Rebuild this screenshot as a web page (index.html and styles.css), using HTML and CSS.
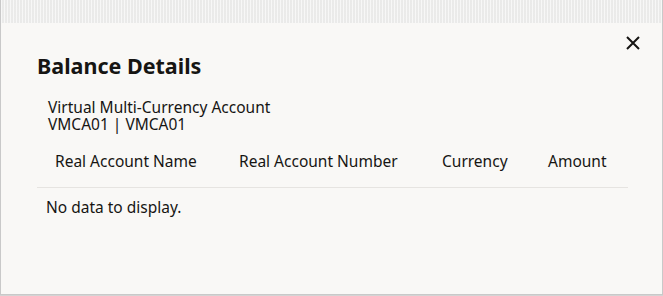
FILE: index.html
```html
<!DOCTYPE html>
<html>
<head>
<meta charset="utf-8">
<link rel="stylesheet" href="styles.css">
</head>
<body>
<div class="frame">
  <div class="topband"></div>
  <div class="dialog">
    <button class="close" aria-label="Close">
      <svg width="14" height="14" viewBox="0 0 14 14"><path d="M1 1 L13 13 M13 1 L1 13" stroke="#161513" stroke-width="2" fill="none"/></svg>
    </button>
    <h1 class="title">Balance Details</h1>
    <div class="account">
      <div>Virtual Multi-Currency Account</div>
      <div>VMCA01 | VMCA01</div>
    </div>
    <div class="table">
      <div class="thead">
        <div class="th">Real Account Name</div>
        <div class="th">Real Account Number</div>
        <div class="th">Currency</div>
        <div class="th">Amount</div>
      </div>
      <div class="empty">No data to display.</div>
    </div>
  </div>
</div>
</body>
</html>
```

FILE: styles.css
```css
html, body {
  margin: 0;
  padding: 0;
}
body {
  width: 663px;
  height: 296px;
  overflow: hidden;
  font-family: "Noto Sans", "Liberation Sans", sans-serif;
  color: #161513;
  background: #d4d4d4;
}
.frame {
  height: 295px;
  border-left: 1px solid #c9c9c9;
  border-right: 1px solid #c9c9c9;
  border-bottom: 1px solid #c9c9c9;
  box-sizing: border-box;
  background: #f9f8f6;
  display: flex;
  flex-direction: column;
}
.topband {
  height: 23px;
  background-color: #efefee;
  background-image: repeating-linear-gradient(90deg, rgba(255,255,255,0.5) 0 1px, rgba(0,0,0,0.02) 1px 3px);
}
.dialog {
  position: relative;
  padding: 0 34px 0 36px;
}
.close {
  position: absolute;
  right: 19px;
  top: 10px;
  width: 20px;
  height: 20px;
  padding: 3px;
  border: 0;
  background: none;
  display: flex;
}
.title {
  margin: 29px 0 0 0;
  font-size: 21.5px;
  line-height: 28px;
  font-weight: 700;
}
.account {
  margin: 19px 0 0 11px;
  font-size: 15.5px;
  line-height: 17px;
}
.table {
  margin-top: 14px;
}
.thead {
  display: grid;
  grid-template-columns: 184px 203px 106px 1fr;
  padding: 0 0 0 18px;
  height: 41px;
  align-items: start;
  border-bottom: 1px solid #e6e4e1;
  font-size: 15.5px;
  line-height: 17px;
  padding-top: 6px;
  box-sizing: border-box;
}
.empty {
  padding: 11px 0 0 9px;
  font-size: 15.5px;
  line-height: 17px;
}
```
